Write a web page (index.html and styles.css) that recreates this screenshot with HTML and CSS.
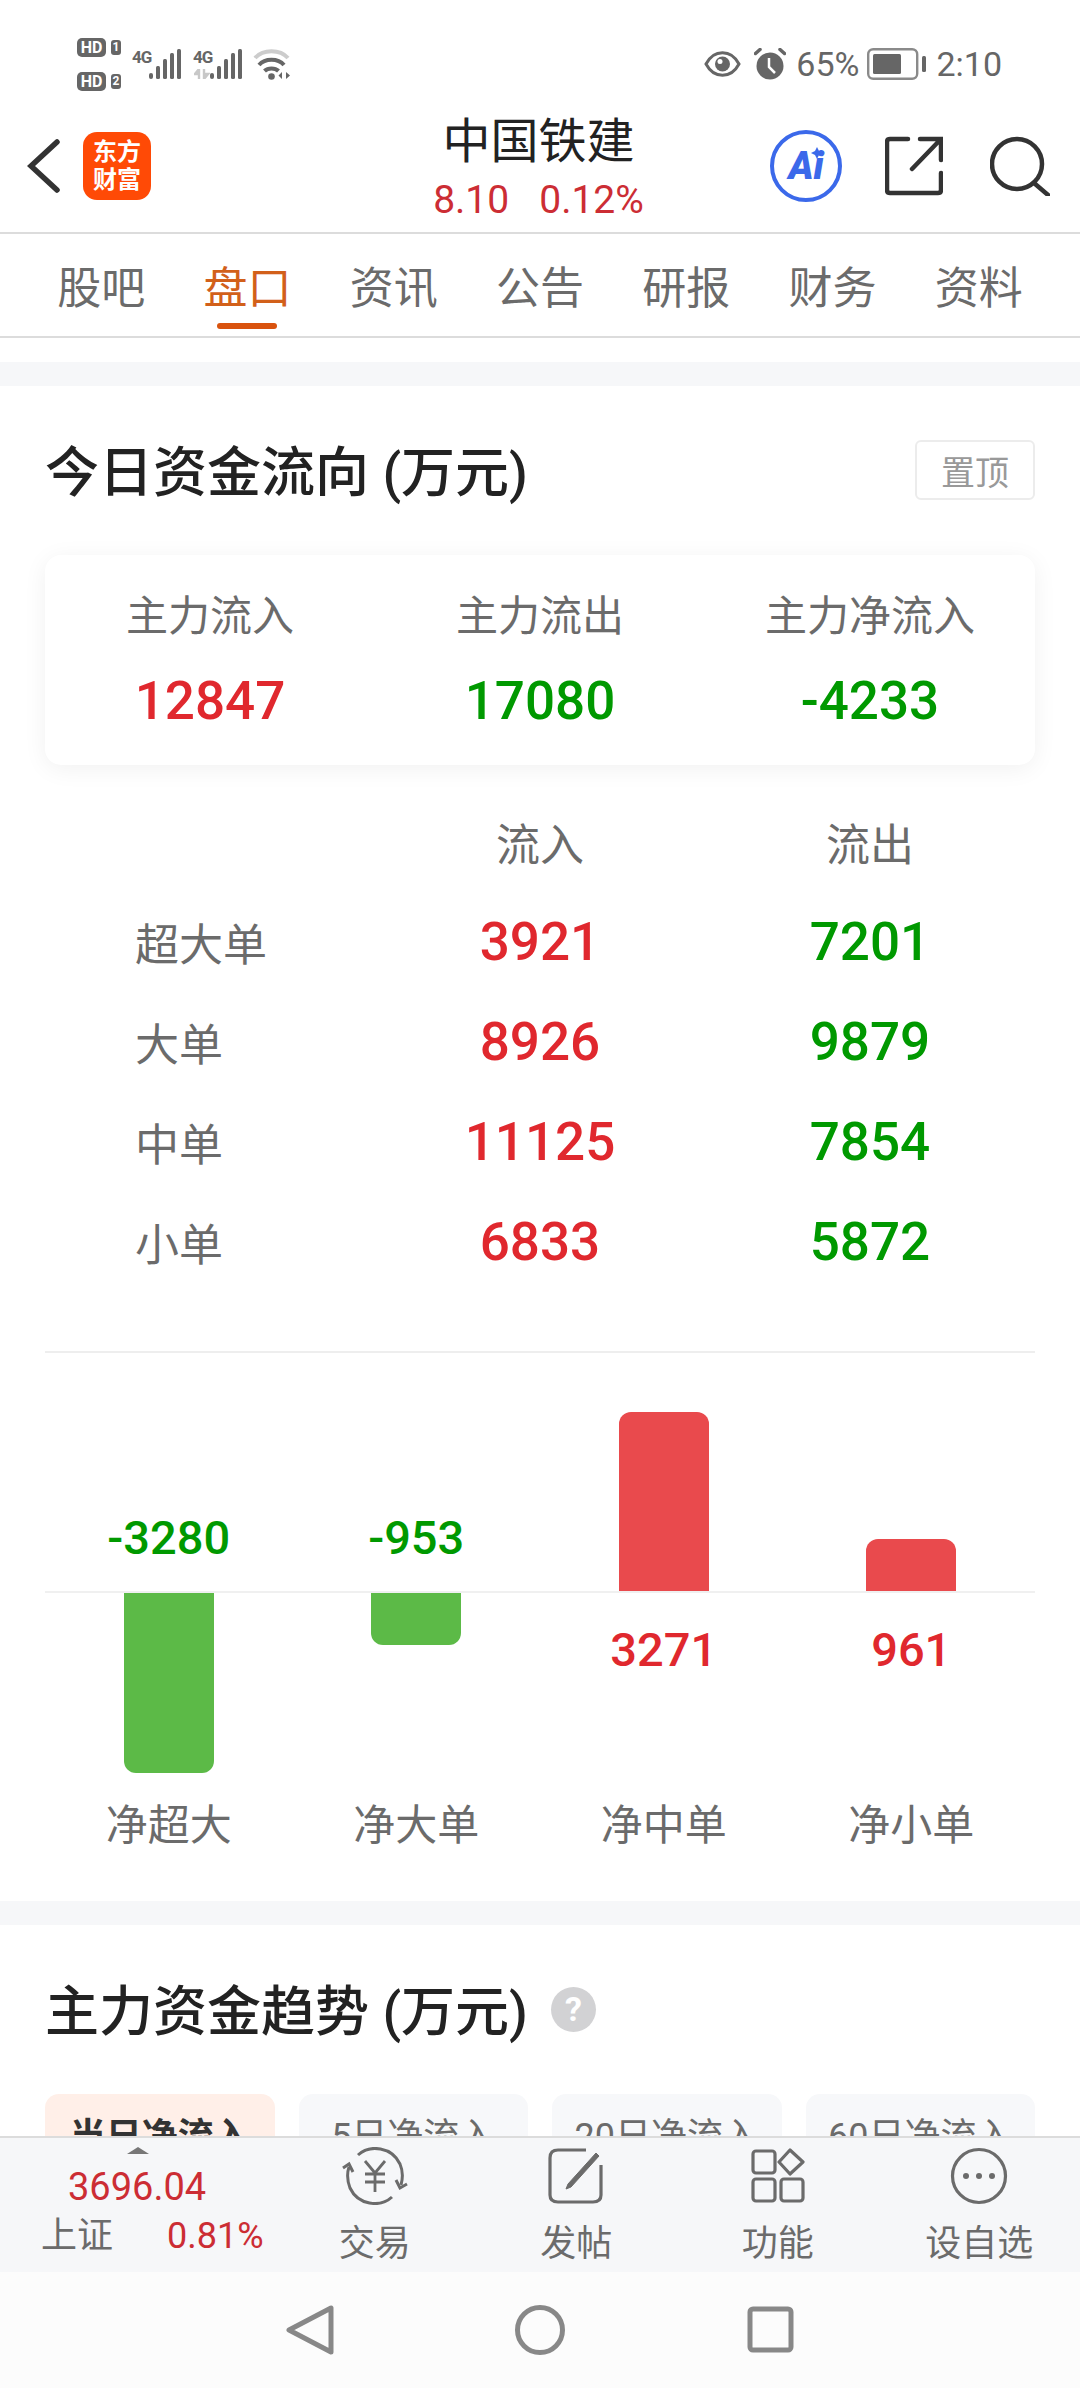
FILE: index.html
```html
<!DOCTYPE html>
<html lang="zh-CN">
<head>
    <meta charset="UTF-8">
    <meta name="viewport" content="width=device-width, initial-scale=1.0">
    <title>中国铁建 盘口</title>
    <link rel="stylesheet" href="styles.css">
</head>
<body>
<div class="page">
    <!-- Status bar -->
    <div class="status-bar">
        <div class="status-left">
            <div class="hd-col">
                <div class="hd-row"><span class="hd-pill">HD</span><span class="hd-num">1</span></div>
                <div class="hd-row"><span class="hd-pill">HD</span><span class="hd-num">2</span></div>
            </div>
            <div class="signal">
                <span class="net">4G</span>
                <svg class="signal-bars" width="33" height="30" viewBox="0 0 33 30"><rect x="0" y="24" width="4" height="6" rx="2"/><rect x="7" y="17" width="4" height="13" rx="1.5"/><rect x="14" y="10" width="4" height="20" rx="1.5"/><rect x="21" y="4" width="4" height="26" rx="1.5"/><rect x="28" y="0" width="4" height="30" rx="1.5"/></svg>
            </div>
            <div class="signal">
                <span class="net">4G</span>
                <svg class="signal-arrows" width="16" height="10" viewBox="0 0 16 10"><path d="M5 0v10M5 0 1 5h4M10 0v10M10 10l4-5h-4" fill="none" stroke="#c8c8c8" stroke-width="2.4"/></svg>
                <svg class="signal-bars" width="33" height="30" viewBox="0 0 33 30"><rect x="0" y="24" width="4" height="6" rx="2"/><rect x="7" y="17" width="4" height="13" rx="1.5"/><rect x="14" y="10" width="4" height="20" rx="1.5"/><rect x="21" y="4" width="4" height="26" rx="1.5"/><rect x="28" y="0" width="4" height="30" rx="1.5"/></svg>
            </div>
            <svg class="wifi" width="38" height="32" viewBox="0 0 38 32">
                <path d="M2 10C10 1 27 1 35 10" fill="none" stroke="#cccccc" stroke-width="4"/>
                <path d="M6 17C12 10 25 10 31 17" fill="none" stroke="#666" stroke-width="4"/>
                <path d="M11.5 23C15 19.5 22 19.5 25.5 23" fill="none" stroke="#666" stroke-width="4"/>
                <circle cx="18.5" cy="28.5" r="3.3" fill="#666"/>
                <path d="M29 24v7l-3.5-3.5zM33 24v7l4-3.5z" fill="#666"/>
            </svg>
        </div>
        <div class="status-right">
            <svg width="37" height="28" viewBox="0 0 37 28"><path d="M2 14C10 -1 27 -1 35 14C27 29 10 29 2 14Z" fill="none" stroke="#666" stroke-width="3"/><circle cx="18.5" cy="14" r="7.5" fill="#666"/><circle cx="16" cy="11.5" r="2.5" fill="#fff"/></svg>
            <svg class="alarm" width="32" height="32" viewBox="0 0 32 32"><circle cx="16" cy="18" r="13.5" fill="#666"/><path d="M1.5 5.5 6 1.5M30.5 5.5 26 1.5" stroke="#666" stroke-width="3.5" stroke-linecap="round"/><path d="M15 10v9l6 6" fill="none" stroke="#fff" stroke-width="2.5"/></svg>
            <span class="status-pct">65%</span>
            <svg class="battery" width="60" height="32" viewBox="0 0 60 32"><rect x="1.2" y="1.2" width="49" height="29.6" rx="5" fill="none" stroke="#8a8a8a" stroke-width="2.4"/><rect x="6" y="6" width="28" height="20" rx="1.5" fill="#666"/><rect x="55" y="8" width="4" height="16" rx="1.5" fill="#666"/></svg>
            <span class="status-time">2:10</span>
        </div>
    </div>

    <!-- Header -->
    <header class="top-bar">
        <div class="top-left">
            <svg class="back" width="34" height="54" viewBox="0 0 34 54"><path d="M30 3 4 27 30 51" fill="none" stroke="#333" stroke-width="5.5" stroke-linecap="round"/></svg>
            <div class="logo"><span>东方</span><span>财富</span></div>
        </div>
        <div class="top-title">
            <div class="stock-name">中国铁建</div>
            <div class="stock-price"><span>8.10</span><span>0.12%</span></div>
        </div>
        <div class="top-right">
            <div class="ai-badge">
                <span>Ai</span>
                <svg class="ai-star" width="12" height="12" viewBox="0 0 12 12"><path d="M6 0 8 4 12 6 8 8 6 12 4 8 0 6 4 4Z" fill="#3b69ea"/></svg>
            </div>
            <svg class="share" width="58" height="60" viewBox="0 0 58 60"><path d="M23 3H5Q2 3 2 6V54Q2 57 5 57H53Q56 57 56 54V37M27 33 55 4M35 3H56V24" fill="none" stroke="#333" stroke-width="4.5" stroke-linecap="round"/></svg>
            <svg width="60" height="60" viewBox="0 0 60 60"><circle cx="27" cy="28" r="25" fill="none" stroke="#333" stroke-width="4.5"/><path d="M44 47 58 59" stroke="#333" stroke-width="4.5" stroke-linecap="round"/></svg>
        </div>
    </header>

    <!-- Tabs -->
    <nav class="tabs">
        <div class="tab">股吧</div>
        <div class="tab active">盘口</div>
        <div class="tab">资讯</div>
        <div class="tab">公告</div>
        <div class="tab">研报</div>
        <div class="tab">财务</div>
        <div class="tab">资料</div>
    </nav>

    <main class="content">
        <div class="band"></div>

        <!-- Today's flow -->
        <section class="section">
            <div class="section-head">
                <h2>今日资金流向 (万元)</h2>
                <button class="pin-btn">置顶</button>
            </div>

            <div class="summary">
                <div class="summary-col"><div class="summary-label">主力流入</div><div class="num up">12847</div></div>
                <div class="summary-col"><div class="summary-label">主力流出</div><div class="num down">17080</div></div>
                <div class="summary-col"><div class="summary-label">主力净流入</div><div class="num down">-4233</div></div>
            </div>

            <div class="flow-table">
                <div></div><div class="flow-head">流入</div><div class="flow-head">流出</div>
                <div class="flow-name">超大单</div><div class="num up">3921</div><div class="num down">7201</div>
                <div class="flow-name">大单</div><div class="num up">8926</div><div class="num down">9879</div>
                <div class="flow-name">中单</div><div class="num up">11125</div><div class="num down">7854</div>
                <div class="flow-name">小单</div><div class="num up">6833</div><div class="num down">5872</div>
            </div>

            <div class="chart">
                <div class="chart-col">
                    <div class="chart-up"><div class="bar-val down">-3280</div></div>
                    <div class="chart-down"><div class="bar bar-green" style="height:180px"></div></div>
                    <div class="chart-name">净超大</div>
                </div>
                <div class="chart-col">
                    <div class="chart-up"><div class="bar-val down">-953</div></div>
                    <div class="chart-down"><div class="bar bar-green" style="height:52px"></div></div>
                    <div class="chart-name">净大单</div>
                </div>
                <div class="chart-col">
                    <div class="chart-up"><div class="bar bar-red" style="height:179px"></div></div>
                    <div class="chart-down"><div class="bar-val below up">3271</div></div>
                    <div class="chart-name">净中单</div>
                </div>
                <div class="chart-col">
                    <div class="chart-up"><div class="bar bar-red" style="height:52px"></div></div>
                    <div class="chart-down"><div class="bar-val below up">961</div></div>
                    <div class="chart-name">净小单</div>
                </div>
            </div>
        </section>

        <div class="band"></div>

        <!-- Main flow trend -->
        <section class="section">
            <div class="section-head head-left">
                <h2>主力资金趋势 (万元)</h2>
                <span class="help">?</span>
            </div>
            <div class="range-tabs">
                <div class="range active">当日净流入</div>
                <div class="range">5日净流入</div>
                <div class="range">20日净流入</div>
                <div class="range">60日净流入</div>
            </div>
        </section>
    </main>

    <!-- Bottom toolbar -->
    <div class="toolbar">
        <div class="market">
            <div class="market-arrow"></div>
            <div class="market-price">3696.04</div>
            <div class="market-row"><span class="market-name">上证</span><span class="market-pct">0.81%</span></div>
        </div>
        <div class="tool">
            <svg width="66" height="58" viewBox="0 0 66 58" fill="none" stroke="#6b6b6b" stroke-width="3">
                <path d="M16 8C28 -3 50 0 58 17C61 24 61 31 59 38"/>
                <path d="M54 33 58 41 65 37"/>
                <path d="M50 50C38 61 16 58 8 41C5 33 5 26 7 20"/>
                <path d="M1 21 7 17 11 25"/>
                <path d="M23 14 33 26 43 14M33 26V45M23 27H43M23 35H43" stroke-width="2.8"/>
            </svg>
            <div class="tool-name">交易</div>
        </div>
        <div class="tool">
            <svg width="56" height="58" viewBox="0 0 56 58" fill="none" stroke="#6b6b6b" stroke-width="3.2">
                <path d="M38 3H10Q2 3 2 11V48Q2 55 10 55H45Q53 55 53 48V18"/>
                <path d="M20 37 48 6 51 9 23 40 18 42Z" fill="#6b6b6b" stroke-width="1"/>
            </svg>
            <div class="tool-name">发帖</div>
        </div>
        <div class="tool">
            <svg width="54" height="56" viewBox="0 0 54 56" fill="none" stroke="#6b6b6b" stroke-width="3.2">
                <rect x="2" y="3" width="22" height="22" rx="3"/>
                <rect x="2" y="31" width="22" height="22" rx="3"/>
                <rect x="30" y="31" width="22" height="22" rx="3"/>
                <path d="M39 2 52 14 39 26 28 14Z" stroke-linejoin="round"/>
            </svg>
            <div class="tool-name">功能</div>
        </div>
        <div class="tool">
            <svg width="58" height="58" viewBox="0 0 58 58"><circle cx="29" cy="29" r="26.5" fill="none" stroke="#6b6b6b" stroke-width="3.2"/><circle cx="16" cy="29" r="3" fill="#6b6b6b"/><circle cx="29" cy="29" r="3" fill="#6b6b6b"/><circle cx="42" cy="29" r="3" fill="#6b6b6b"/></svg>
            <div class="tool-name">设自选</div>
        </div>
    </div>

    <!-- System navigation -->
    <div class="sys-nav">
        <svg width="60" height="56" viewBox="0 0 60 56"><path d="M51 6V50L9 28Z" fill="none" stroke="#888" stroke-width="5" stroke-linejoin="round"/></svg>
        <svg width="60" height="56" viewBox="0 0 60 56"><circle cx="30" cy="28" r="22.5" fill="none" stroke="#888" stroke-width="5"/></svg>
        <svg width="60" height="56" viewBox="0 0 60 56"><rect x="10" y="7" width="41" height="41" rx="3" fill="none" stroke="#888" stroke-width="5"/></svg>
    </div>
</div>
</body>
</html>
```

FILE: styles.css
```css
/* Base */
* {
    box-sizing: border-box;
}

body {
    margin: 0;
    background-color: #fff;
    font-family: Roboto, "Noto Sans CJK SC", sans-serif;
    color: #6b6b6b;
}

.page {
    width: 1080px;
    height: 2388px;
    display: flex;
    flex-direction: column;
    overflow: hidden;
}

/* Status bar */
.status-bar {
    height: 100px;
    padding: 28px 78px 0 77px;
    display: flex;
    align-items: center;
    justify-content: space-between;
    color: #666;
}

.status-left,
.status-right {
    display: flex;
    align-items: center;
}

.hd-col {
    display: flex;
    flex-direction: column;
    gap: 15px;
}

.hd-row {
    display: flex;
    align-items: center;
    gap: 5px;
    height: 19px;
}

.hd-pill {
    width: 29px;
    height: 19px;
    border-radius: 5px;
    background-color: #666;
    color: #fff;
    font-size: 16px;
    font-weight: 700;
    line-height: 19px;
    text-align: center;
}

.hd-num {
    width: 10px;
    height: 15px;
    border-radius: 3px;
    background-color: #666;
    color: #fff;
    font-size: 12px;
    font-weight: 700;
    line-height: 15px;
    text-align: center;
}

.signal {
    position: relative;
    width: 50px;
    height: 30px;
    margin-left: 11px;
}

.net {
    position: absolute;
    left: 0;
    top: -2px;
    width: 18px;
    font-size: 17px;
    font-weight: 700;
    line-height: 20px;
    letter-spacing: -1px;
    color: #666;
}

.signal-bars {
    position: absolute;
    right: 0;
    top: 0;
    fill: #666;
}

.signal-arrows {
    position: absolute;
    left: 1px;
    bottom: 0;
}

.wifi {
    margin-left: 10px;
}

.status-right svg {
    display: block;
}

.alarm {
    margin-left: 13px;
}

.status-pct {
    margin-left: 10px;
    font-size: 34px;
    line-height: 40px;
}

.battery {
    margin-left: 8px;
}

.status-time {
    margin-left: 9px;
    font-size: 34px;
    line-height: 40px;
}

/* Header */
.top-bar {
    height: 134px;
    padding: 0 30px 0 27px;
    display: grid;
    grid-template-columns: 1fr auto 1fr;
    align-items: center;
    border-bottom: 2px solid #dcdcdc;
}

.top-left {
    display: flex;
    align-items: center;
    gap: 22px;
}

.logo {
    width: 68px;
    height: 68px;
    border-radius: 14px;
    background-color: #ff4a06;
    color: #fff;
    display: flex;
    flex-direction: column;
    align-items: center;
    justify-content: center;
    font-size: 24px;
    font-weight: 700;
    line-height: 28px;
}

.top-title {
    margin-top: 3px;
    text-align: center;
}

.stock-name {
    font-size: 48px;
    line-height: 58px;
    color: #222;
}

.stock-price {
    margin-top: 6px;
    display: flex;
    justify-content: center;
    gap: 30px;
    font-size: 39px;
    line-height: 46px;
    color: #cc2d34;
}

.top-right {
    display: flex;
    align-items: center;
    justify-content: flex-end;
    gap: 43px;
}

.top-right svg {
    display: block;
}

.share {
    margin-right: 4px;
}

.ai-badge {
    position: relative;
    width: 72px;
    height: 72px;
    border: 4px solid #3b69ea;
    border-radius: 50%;
    color: #3b69ea;
    font-size: 38px;
    font-weight: 900;
    font-style: italic;
    line-height: 64px;
    text-align: center;
}

.ai-star {
    position: absolute;
    right: 15px;
    top: 13px;
}

/* Tabs */
.tabs {
    height: 104px;
    padding: 0 28px;
    display: grid;
    grid-template-columns: repeat(7, 1fr);
    border-bottom: 2px solid #dcdcdc;
}

.tab {
    position: relative;
    padding-top: 26px;
    text-align: center;
    font-size: 44px;
    line-height: 58px;
}

.tab.active {
    color: #d2601a;
}

.tab.active::after {
    content: "";
    position: absolute;
    left: 50%;
    bottom: 7px;
    width: 60px;
    height: 6px;
    margin-left: -30px;
    border-radius: 3px;
    background-color: #d9530e;
}

/* Content */
.content {
    flex: 1;
    min-height: 0;
    overflow: hidden;
    padding-top: 24px;
}

.band {
    height: 24px;
    background-color: #f6f7f9;
}

.section {
    padding: 54px 45px 45px;
}

.section-head {
    height: 60px;
    display: flex;
    align-items: center;
    justify-content: space-between;
}

.section-head h2 {
    margin: 0;
    font-size: 54px;
    font-weight: 500;
    line-height: 60px;
    color: #222;
    position: relative;
    top: 4px;
}

.head-left {
    justify-content: flex-start;
    gap: 23px;
}

.pin-btn {
    width: 120px;
    height: 60px;
    padding: 0;
    border: 2px solid #ececec;
    border-radius: 6px;
    background-color: #fff;
    font-family: inherit;
    font-size: 34px;
    color: #999;
}

.help {
    width: 45px;
    height: 45px;
    border-radius: 50%;
    background-color: #d2d2d4;
    color: #fff;
    font-size: 34px;
    font-weight: 700;
    line-height: 45px;
    text-align: center;
}

/* Summary card */
.summary {
    margin-top: 55px;
    height: 210px;
    padding-top: 32px;
    display: grid;
    grid-template-columns: repeat(3, 1fr);
    border-radius: 16px;
    background-color: #fff;
    box-shadow: 0 4px 24px rgba(0, 0, 0, 0.06);
}

.summary-col {
    text-align: center;
}

.summary-label {
    font-size: 42px;
    line-height: 60px;
}

.summary .num {
    margin-top: 24px;
}

.num {
    font-size: 53px;
    font-weight: 500;
    line-height: 60px;
    text-align: center;
}

.up {
    color: #e0282e;
}

.down {
    color: #009900;
}

/* Flow table */
.flow-table {
    margin-top: 27px;
    padding-bottom: 59px;
    border-bottom: 2px solid #eeeeee;
    display: grid;
    grid-template-columns: repeat(3, 1fr);
    grid-auto-rows: 100px;
    align-items: center;
}

.flow-head {
    font-size: 44px;
    text-align: center;
}

.flow-name {
    padding-left: 90px;
    font-size: 44px;
}

/* Net flow bars */
.chart {
    padding-top: 59px;
    display: grid;
    grid-template-columns: repeat(4, 1fr);
}

.chart-col {
    display: flex;
    flex-direction: column;
}

.chart-up {
    height: 181px;
    border-bottom: 2px solid #f0f0f0;
    display: flex;
    flex-direction: column;
    align-items: center;
    justify-content: flex-end;
}

.chart-down {
    height: 179px;
    display: flex;
    flex-direction: column;
    align-items: center;
}

.bar {
    width: 90px;
    flex-shrink: 0;
}

.bar-green {
    background-color: #5cba47;
    border-radius: 0 0 12px 12px;
}

.bar-red {
    background-color: #e94a4d;
    border-radius: 12px 12px 0 0;
}

.bar-val {
    margin-bottom: 23px;
    font-size: 47px;
    font-weight: 500;
    line-height: 60px;
}

.bar-val.below {
    margin-top: 27px;
    margin-bottom: 0;
}

.chart-name {
    margin-top: 24px;
    font-size: 42px;
    line-height: 60px;
    text-align: center;
}

/* Range tabs, cut off by the toolbar */
.range-tabs {
    margin-top: 55px;
    display: grid;
    grid-template-columns: repeat(4, 1fr);
    gap: 24px;
}

.range {
    height: 90px;
    border-radius: 14px;
    background-color: #f7f8fa;
    font-size: 36px;
    line-height: 86px;
    text-align: center;
}

.range.active {
    background-color: #ffefe8;
    font-weight: 700;
    color: #333;
}

/* Bottom toolbar */
.toolbar {
    height: 136px;
    border-top: 2px solid #dcdcdc;
    background-color: #f6f7f9;
    display: grid;
    grid-template-columns: 274px repeat(4, 1fr);
}

.market {
    padding: 9px 0 0 41px;
}

.market-arrow {
    width: 0;
    height: 0;
    margin-left: 86px;
    border-left: 11px solid transparent;
    border-right: 11px solid transparent;
    border-bottom: 7px solid #777;
}

.market-price {
    margin: 11px 0 0 27px;
    font-size: 38px;
    line-height: 44px;
    color: #cc2d34;
}

.market-row {
    margin-top: 2px;
    display: flex;
    gap: 54px;
    font-size: 36px;
    line-height: 50px;
}

.market-pct {
    color: #cc2d34;
}

.tool {
    padding-top: 9px;
    display: flex;
    flex-direction: column;
    align-items: center;
}

.tool svg {
    display: block;
    height: 58px;
}

.tool-name {
    margin-top: 17px;
    font-size: 36px;
    line-height: 44px;
}

/* System navigation */
.sys-nav {
    height: 116px;
    padding-top: 30px;
    background-color: #fcfcfc;
    display: flex;
    align-items: flex-start;
    justify-content: center;
    gap: 170px;
}
```
